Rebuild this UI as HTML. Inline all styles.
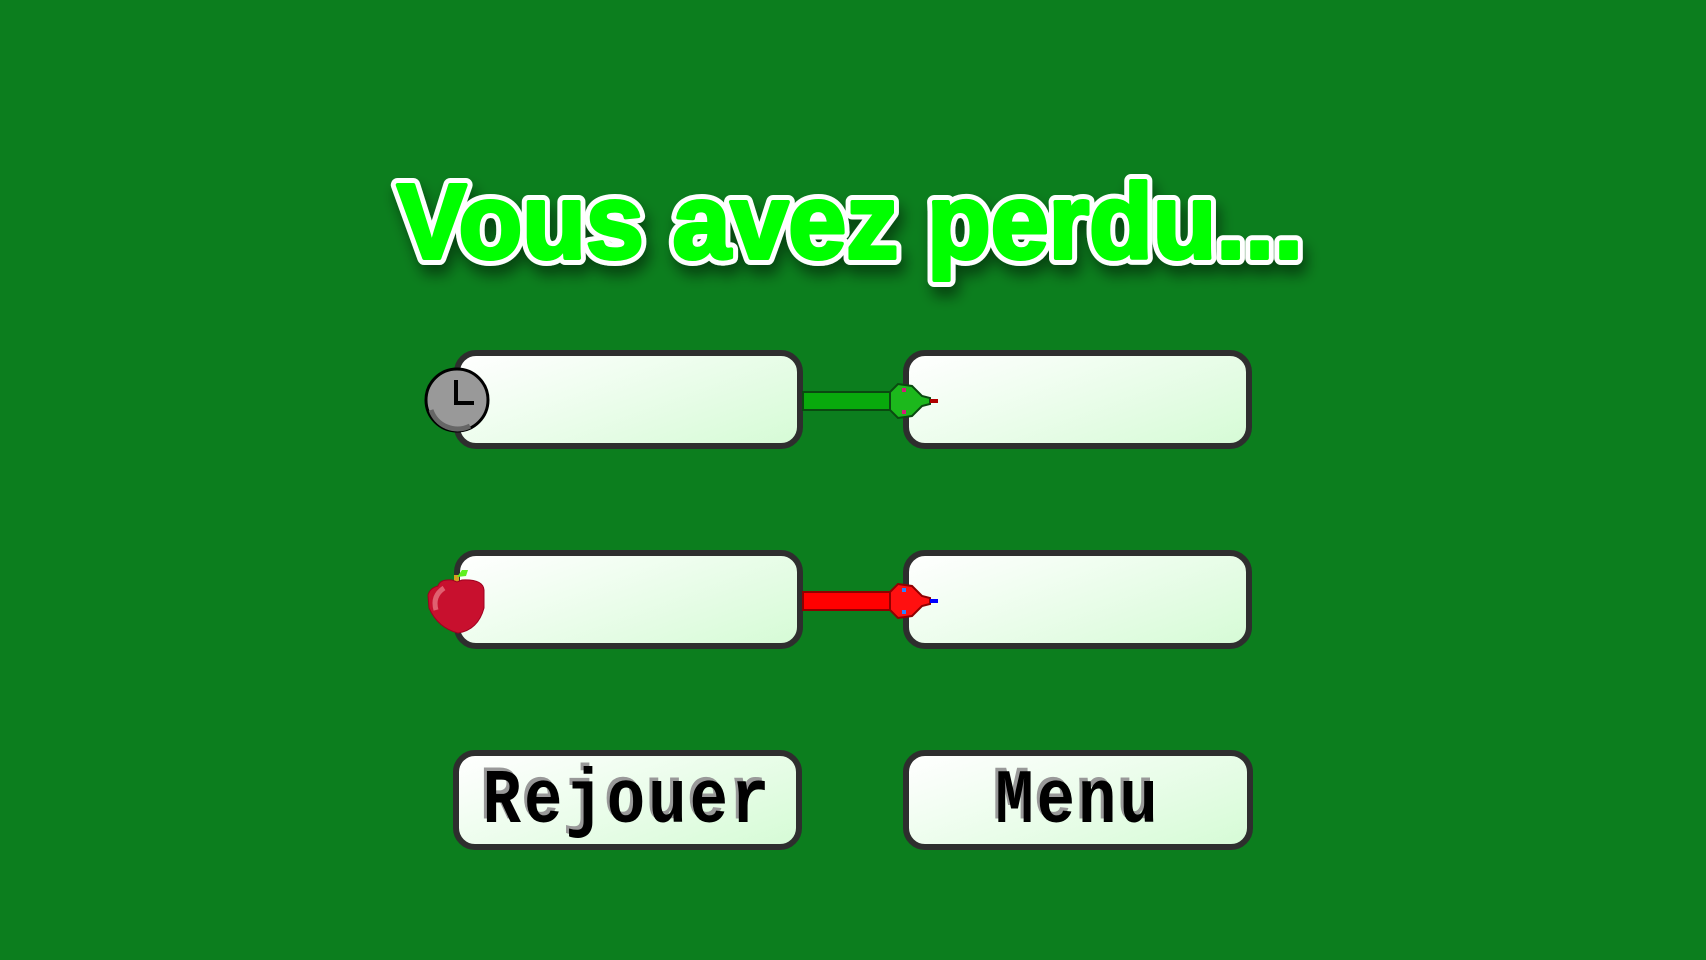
<!DOCTYPE html>
<html><head><meta charset="utf-8"><style>
html,body{margin:0;padding:0}
body{width:1706px;height:960px;background:#0c7e1e;position:relative;overflow:hidden;font-family:"Liberation Sans",sans-serif}
.box{position:absolute;box-sizing:border-box;border:6px solid #2e2e2e;border-radius:22px;background:linear-gradient(160deg,#ffffff,#d6fbd6)}
.btn{display:flex;align-items:center;justify-content:center;font-family:"Liberation Mono",monospace;font-weight:bold;font-size:64px;color:#000;text-shadow:-3px -3px 0 #999;letter-spacing:3px;padding-top:6px}
.btn span{display:inline-block;transform:scaleY(1.2)}
</style></head><body>
<svg width="1706" height="960" style="position:absolute;left:0;top:0">
<defs><filter id="sh" x="-10%" y="-30%" width="120%" height="160%"><feDropShadow dx="4" dy="10" stdDeviation="7" flood-color="#000" flood-opacity="0.45"/></filter></defs>
<g font-family="Liberation Sans" font-weight="bold" font-size="106">
<text x="397" y="258" textLength="906" lengthAdjust="spacingAndGlyphs" fill="#fff" stroke="#fff" stroke-width="14" stroke-linejoin="round" filter="url(#sh)">Vous avez perdu...</text>
<text x="397" y="258" textLength="906" lengthAdjust="spacingAndGlyphs" fill="#00ff00" stroke="#00ff00" stroke-width="4" stroke-linejoin="round">Vous avez perdu...</text>
</g>
</svg>
<div class="box" style="left:454px;top:350px;width:349px;height:99px"></div>
<div class="box" style="left:903px;top:350px;width:349px;height:99px"></div>
<div class="box" style="left:454px;top:550px;width:349px;height:99px"></div>
<div class="box" style="left:903px;top:550px;width:349px;height:99px"></div>
<div class="box btn" style="left:453px;top:750px;width:349px;height:100px"><span>Rejouer</span></div>
<div class="box btn" style="left:903px;top:750px;width:350px;height:100px"><span>Menu</span></div>
<svg width="1706" height="960" style="position:absolute;left:0;top:0">
<circle cx="457" cy="400" r="31" fill="#999" stroke="#000" stroke-width="3"/>
<path d="M431 410 A28 28 0 0 0 470 426" stroke="#666" stroke-width="5" fill="none"/>
<path d="M456 380 V403 H474" stroke="#000" stroke-width="4" fill="none"/>
<rect x="803" y="392" width="92" height="18" fill="#08aa0c" stroke="#0a4a10" stroke-width="2"/>
<path d="M890 392 L898 384 L912 386 L922 396 L930 398 L930 404 L922 406 L912 416 L898 418 L890 410 Z" fill="#1cb81c" stroke="#0a4a10" stroke-width="2"/>
<rect x="930" y="399" width="8" height="4" fill="#b00000"/>
<rect x="902" y="388" width="4" height="4" fill="#d0207a"/><rect x="902" y="410" width="4" height="4" fill="#d0207a"/>
<rect x="803" y="592" width="92" height="18" fill="#ff0000" stroke="#900000" stroke-width="2"/>
<path d="M890 592 L898 584 L912 586 L922 596 L930 598 L930 604 L922 606 L912 616 L898 618 L890 610 Z" fill="#ff1010" stroke="#900000" stroke-width="2"/>
<rect x="930" y="599" width="8" height="4" fill="#0000ff"/>
<rect x="902" y="588" width="4" height="4" fill="#3080ff"/><rect x="902" y="610" width="4" height="4" fill="#3080ff"/>
<rect x="454" y="575" width="5" height="10" fill="#d8a020"/>
<path d="M457 577 L462 570 L468 570 L466 576 Z" fill="#60f020"/>
<path d="M438 586 Q440 579 452 580 L457 582 L462 580 Q483 579 484 590 L484 608 Q478 630 458 633 Q438 628 429 608 L428 595 Q430 588 438 586 Z" fill="#c8102e" stroke="#a00020" stroke-width="1"/>
<path d="M436 610 Q432 596 444 588" stroke="#e06070" stroke-width="5" fill="none"/>
</svg>
</body></html>
